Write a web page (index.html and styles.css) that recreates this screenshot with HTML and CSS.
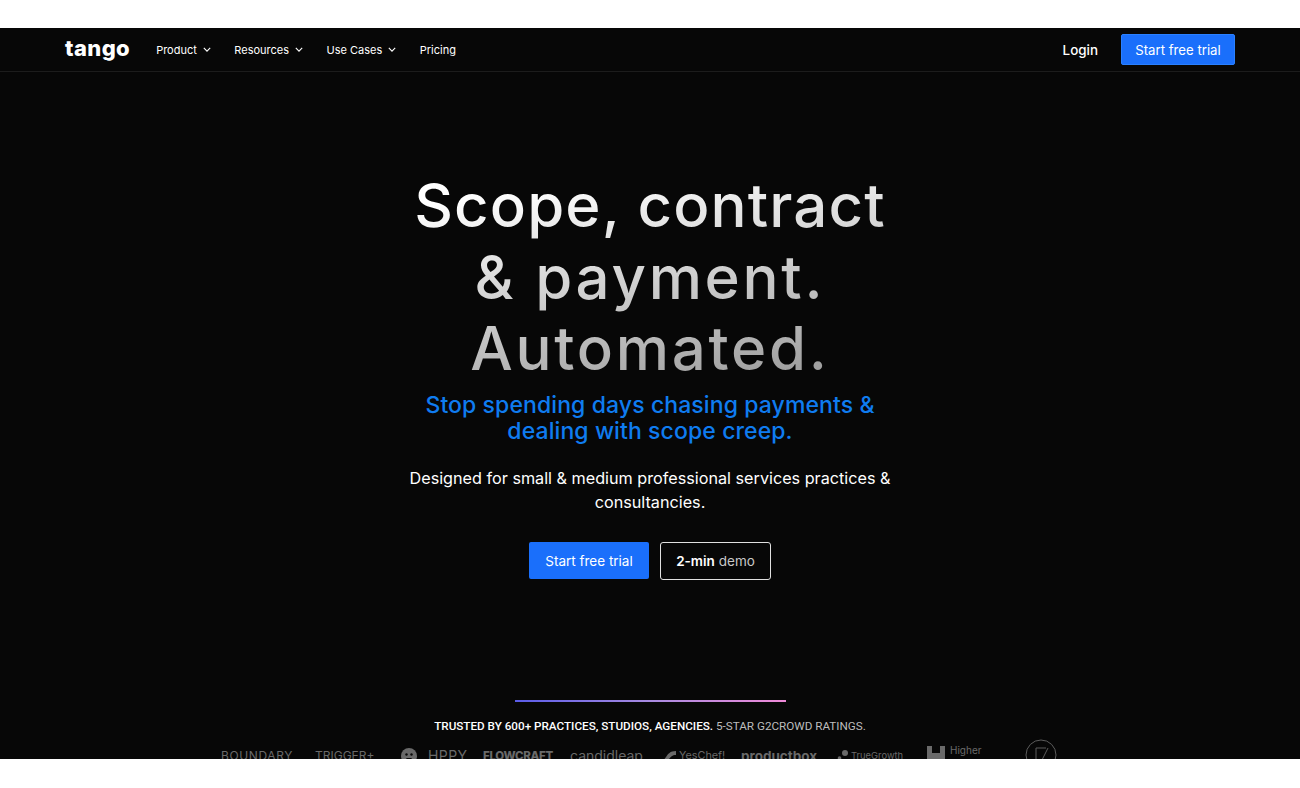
FILE: index.html
```html
<!DOCTYPE html>
<html lang="en">
<head>
	<meta charset="UTF-8">
	<title>Tango</title>
	<link rel="stylesheet" href="styles.css">
</head>
<body>
	<div class="page">
		<header class="nav">
			<div class="nav-left">
				<a class="logo">tango</a>
				<a class="nav-link">Product <svg class="chev" viewBox="0 0 10 6"><path d="M1 1l4 4 4-4"/></svg></a>
				<a class="nav-link">Resources <svg class="chev" viewBox="0 0 10 6"><path d="M1 1l4 4 4-4"/></svg></a>
				<a class="nav-link">Use Cases <svg class="chev" viewBox="0 0 10 6"><path d="M1 1l4 4 4-4"/></svg></a>
				<a class="nav-link">Pricing</a>
			</div>
			<div class="nav-right">
				<a class="login">Login</a>
				<a class="btn btn-nav">Start free trial</a>
			</div>
		</header>

		<section class="hero">
			<h1>Scope, contract<br><span class="wide">&amp; payment.</span><br><span class="wide">Automated.</span></h1>
			<h2>Stop spending days chasing payments &amp;<br>dealing with scope creep.</h2>
			<p class="lead">Designed for small &amp; medium professional services practices &amp; consultancies.</p>
			<div class="actions">
				<a class="btn btn-main">Start free trial</a>
				<a class="btn btn-line"><b>2-min</b> demo</a>
			</div>
		</section>

		<section class="trust">
			<div class="rule"></div>
			<p class="trusted"><b>TRUSTED BY 600+ PRACTICES, STUDIOS, AGENCIES.</b> 5-STAR G2CROWD RATINGS.</p>
			<div class="logos">
				<span class="brand b-boundary">BOUNDARY</span>
				<span class="brand b-trigger">TRIGGER+</span>
				<span class="brand b-hppy"><svg class="mark" width="16" height="16" viewBox="0 0 16 16"><circle cx="8" cy="8" r="8" fill="#6a6a6a"/><circle cx="5.5" cy="6.5" r="1.2" fill="#0a0a0a"/><circle cx="10.5" cy="6.5" r="1.2" fill="#0a0a0a"/><path d="M5 10h6l-3 4z" fill="#0a0a0a"/></svg>HPPY</span>
				<span class="brand b-flow">FLOWCRAFT</span>
				<span class="brand b-candid">candidleap</span>
				<span class="brand b-yes"><svg class="mark" width="17" height="12" viewBox="0 0 17 12"><path d="M0 11c4 0 5-1 7-4s4-6 10-6v4c-4 0-5 2-7 4s-5 3-10 2z" fill="#6a6a6a"/></svg>YesChef!</span>
				<span class="brand b-product">productbox</span>
				<span class="brand b-true"><svg class="mark" width="12" height="12" viewBox="0 0 12 12"><circle cx="9" cy="3" r="3" fill="#6a6a6a"/><circle cx="3.5" cy="8" r="1.8" fill="#6a6a6a"/><circle cx="1" cy="11" r="1" fill="#6a6a6a"/></svg>TrueGrowth</span>
				<span class="brand b-higher"><svg class="mark" width="18" height="18" viewBox="0 0 18 18"><path d="M0 0h5v7h8V0h5v18H0z" fill="#6a6a6a"/></svg>Higher</span>
				<svg class="b-circle" width="32" height="32" viewBox="0 0 32 32"><circle cx="16" cy="16" r="15" fill="none" stroke="#5c5c5c"/><path d="M11 9h10M11 9v15M23 9L15 25" fill="none" stroke="#5c5c5c"/></svg>
			</div>
		</section>
	</div>
</body>
</html>
```

FILE: styles.css
```css
* {
	box-sizing: border-box;
}
body {
	margin: 0;
	padding-top: 28px;
	background-color: #fff;
	font-family: Inter, "Liberation Sans", sans-serif;
	color: #fff;
}
a {
	color: inherit;
	text-decoration: none;
}
.page {
	display: flex;
	flex-direction: column;
	height: 731px;
	overflow: hidden;
	background-color: #070707;
}

/* nav */
.nav {
	display: flex;
	flex: none;
	justify-content: space-between;
	align-items: center;
	height: 44px;
	padding: 0 65px;
	border-bottom: 1px solid #1c1c1c;
}
.nav-left,
.nav-right {
	display: flex;
	align-items: center;
}
.logo {
	margin-right: 26px;
	padding-bottom: 3px;
	font-size: 22px;
	font-weight: 800;
	letter-spacing: 0.4px;
	line-height: 24px;
}
.nav-link {
	display: flex;
	align-items: center;
	margin-right: 23.5px;
	font-size: 11px;
	font-weight: 400;
}
.chev {
	width: 8px;
	height: 5px;
	margin-left: 6px;
	fill: none;
	stroke: #fff;
	stroke-width: 1.4;
}
.login {
	margin-right: 23px;
	font-size: 13.4px;
	font-weight: 500;
}
.btn {
	display: flex;
	justify-content: center;
	align-items: center;
	border-radius: 2px;
}
.btn-nav {
	width: 114px;
	height: 31px;
	background-color: #1a6ffb;
	border: 1px solid #2a80ff;
	font-size: 13.2px;
	font-weight: 400;
}

/* hero */
.hero {
	display: flex;
	flex: none;
	flex-direction: column;
	align-items: center;
	padding-top: 98px;
	text-align: center;
}
h1 {
	margin: 0;
	font-size: 60px;
	font-weight: 500;
	line-height: 71.5px;
	letter-spacing: 1.1px;
	background: linear-gradient(170deg, #fff 12%, #a0a0a0 90%);
	-webkit-background-clip: text;
	background-clip: text;
	color: transparent;
}
h1 .wide {
	letter-spacing: 2.7px;
}
h2 {
	margin: 7px 0 0;
	font-size: 23px;
	font-weight: 500;
	line-height: 26px;
	letter-spacing: 0.1px;
	color: #0f7cf0;
}
.lead {
	width: 500px;
	margin: 22px 0 0;
	font-size: 16.2px;
	line-height: 24px;
}
.actions {
	display: flex;
	align-items: center;
	gap: 11px;
	margin-top: 28px;
}
.btn-main {
	width: 120px;
	height: 37px;
	background-color: #1a6ffb;
	font-size: 13.5px;
	font-weight: 400;
}
.btn-line {
	gap: 4px;
	width: 111px;
	height: 38px;
	border: 1px solid #e0e0e0;
	border-radius: 3px;
	font-size: 13.5px;
	font-weight: 400;
	color: #c8c8c8;
}
.btn-line b {
	font-weight: 600;
	color: #fff;
}

/* logos */
.trust {
	display: flex;
	flex-direction: column;
	align-items: center;
	margin-top: 120px;
}
.rule {
	width: 271px;
	height: 2px;
	background: linear-gradient(90deg, #5a5ce8, #a88ae0 50%, #f08ad8);
}
.trusted {
	margin: 17px 0 0;
	font-family: Roboto, sans-serif;
	font-size: 11.7px;
	line-height: 14px;
	color: #bdbdbd;
}
.trusted b {
	font-weight: 500;
	color: #fff;
}
.logos {
	display: flex;
	align-items: flex-start;
	width: 100%;
	margin-top: 13px;
	padding-left: 221px;
	color: #6a6a6a;
	white-space: nowrap;
}
.brand {
	display: flex;
	flex: none;
	align-items: center;
	height: 16px;
	margin-top: 2px;
}
.mark {
	flex: none;
	margin-right: 3px;
}
.b-boundary {
	width: 94px;
	font-size: 12px;
	letter-spacing: 0.6px;
}
.b-trigger {
	width: 86px;
	font-size: 12px;
}
.b-hppy {
	width: 82px;
	font-size: 14px;
	letter-spacing: 0.4px;
}
.b-hppy .mark {
	margin-right: 11px;
}
.b-flow {
	width: 87px;
	font-size: 11.5px;
	font-weight: 800;
	letter-spacing: -0.3px;
}
.b-candid {
	width: 89px;
	font-size: 14px;
}
.b-yes {
	width: 82px;
	font-size: 10.8px;
}
.b-product {
	width: 95px;
	font-size: 13.5px;
	font-weight: 700;
}
.b-true {
	width: 91px;
	font-size: 9.4px;
}
.b-higher {
	align-items: flex-start;
	width: 98px;
	height: 20px;
	margin-top: 0;
	font-size: 10px;
	line-height: 9px;
}
.b-higher .mark {
	margin-right: 5px;
}
.b-circle {
	flex: none;
	margin-top: -7px;
}
```
